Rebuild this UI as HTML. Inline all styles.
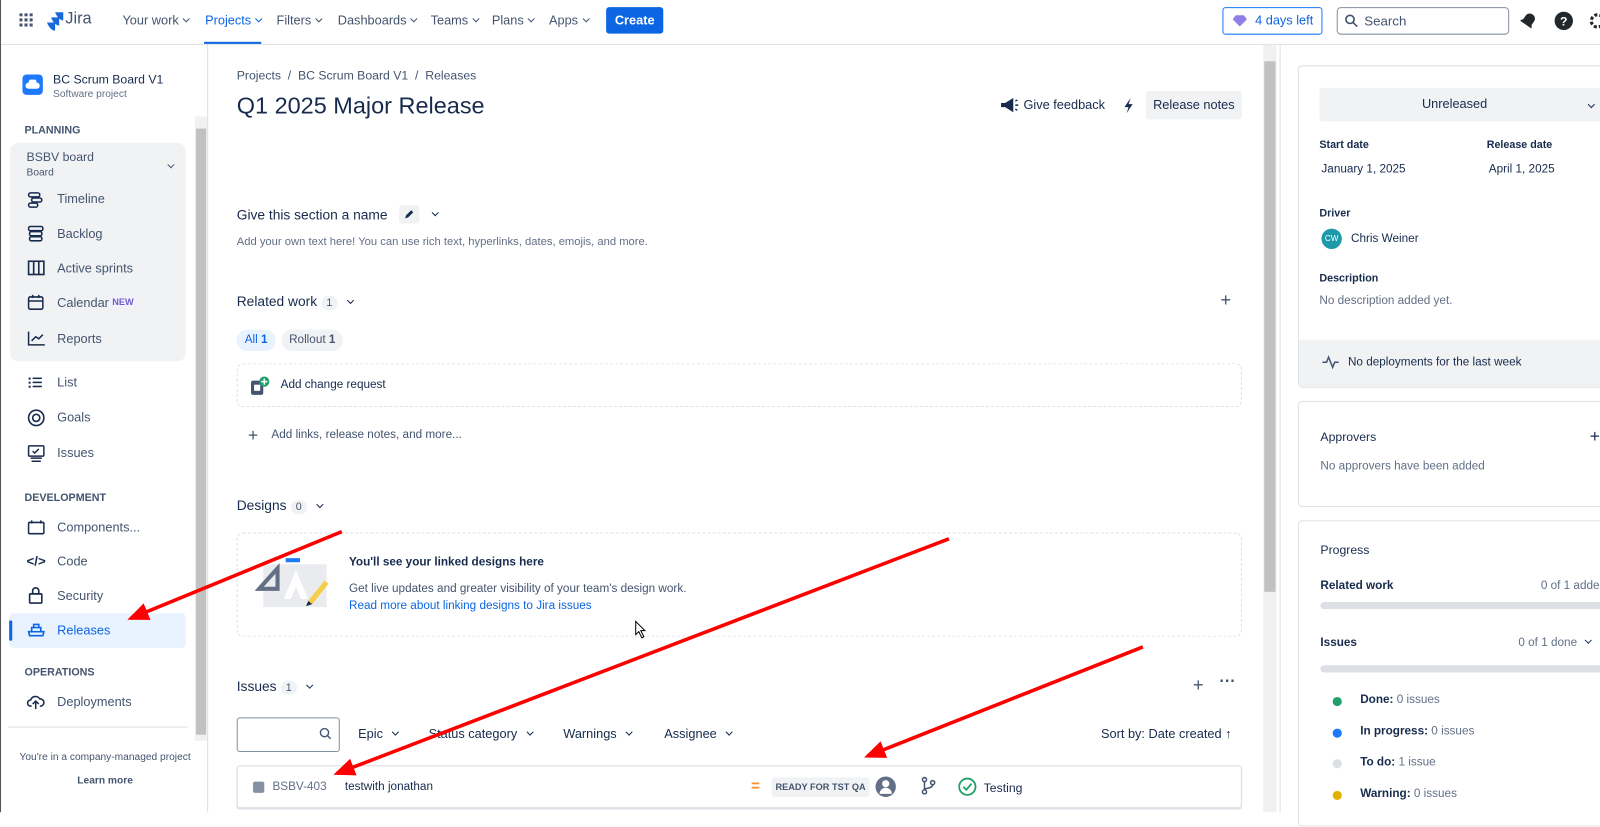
<!DOCTYPE html>
<html><head><meta charset="utf-8"><style>
*{box-sizing:border-box;margin:0;padding:0}
html,body{width:1600px;height:812px;overflow:hidden;background:#fff}
#w{position:absolute;left:0;top:0;width:1568px;height:796px;transform:scale(1.020408);transform-origin:0 0;font-family:"Liberation Sans",sans-serif;color:#172b4d;font-size:13px}
.a{position:absolute;white-space:nowrap}
.g{color:#44546f}
.b{font-weight:bold}
.nav{font-size:12.5px;color:#44546f;top:13px}
.chev{display:inline-block;width:5px;height:5px;border-right:1.6px solid currentColor;border-bottom:1.6px solid currentColor;transform:rotate(45deg);margin-left:5px;position:relative;top:-3px}
.sec{font-size:10.5px;font-weight:bold;color:#44546f}
.si{font-size:12.5px;color:#44546f}
.dash{position:absolute;border:1.5px dashed #dcdfe4;border-radius:6px}
.badge{display:inline-block;background:#f1f2f4;border-radius:8px;padding:1px 5px;font-size:10.5px;color:#44546f;margin-left:4px}
.card{position:absolute;left:1272px;width:310px;border:1px solid #dfe1e6;border-radius:4px;background:#fff}
.lbl{font-size:10.5px;font-weight:bold;color:#172b4d}
.dot{position:absolute;width:9px;height:9px;border-radius:50%;left:1306px}
</style></head><body><div id="w">
<div class="a" style="left:0;top:43px;width:1568px;height:1px;background:#dcdfe4"></div>
<div class="a" style="left:0;top:0;width:1px;height:796px;background:#555"></div>
<svg class="a" style="left:19px;top:13px" width="14" height="14"><g fill="#44546f"><rect x="0" y="0" width="3" height="3"/><rect x="5" y="0" width="3" height="3"/><rect x="10" y="0" width="3" height="3"/><rect x="0" y="5" width="3" height="3"/><rect x="5" y="5" width="3" height="3"/><rect x="10" y="5" width="3" height="3"/><rect x="0" y="10" width="3" height="3"/><rect x="5" y="10" width="3" height="3"/><rect x="10" y="10" width="3" height="3"/></g></svg>
<svg class="a" style="left:45px;top:11px" width="18" height="20"><path d="M9 1h8v8c-3 0-6-3-8-8zM5 6h8v8c-3 0-6-3-8-8zM1 11h8v8c-3 0-6-3-8-8z" fill="#1868db"/></svg>
<div class="a" style="left:64px;top:10px;font-size:16px;color:#44546f">Jira</div>
<div class="a nav" style="left:120px">Your work<span class="chev"></span></div>
<div class="a nav" style="left:201px;color:#0c66e4">Projects<span class="chev"></span></div>
<div class="a" style="left:200px;top:41px;width:56px;height:2px;background:#0c66e4"></div>
<div class="a nav" style="left:271px">Filters<span class="chev"></span></div>
<div class="a nav" style="left:331px">Dashboards<span class="chev"></span></div>
<div class="a nav" style="left:422px">Teams<span class="chev"></span></div>
<div class="a nav" style="left:482px">Plans<span class="chev"></span></div>
<div class="a nav" style="left:538px">Apps<span class="chev"></span></div>
<div class="a" style="left:594px;top:7px;width:56px;height:26px;background:#0c66e4;border-radius:3px;color:#fff;font-weight:bold;text-align:center;line-height:26px;font-size:12.5px">Create</div>
<div class="a" style="left:1198px;top:7px;width:98px;height:27px;border:1px solid #1d7afc;border-radius:3px;color:#0c66e4;line-height:25px;font-size:12.5px;padding-left:31px">4 days left</div>
<svg class="a" style="left:1208px;top:14px" width="14" height="13"><path d="M3 1h8l3 4-7 7-7-7z" fill="#8f7ee7"/></svg>
<div class="a" style="left:1310px;top:7px;width:169px;height:27px;border:1px solid #8590a2;border-radius:4px;color:#44546f;line-height:25px;padding-left:26px;font-size:13px">Search</div>
<svg class="a" style="left:1318px;top:14px" width="13" height="13"><circle cx="5" cy="5" r="4" stroke="#44546f" stroke-width="1.6" fill="none"/><path d="M8 8l4 4" stroke="#44546f" stroke-width="1.6"/></svg>
<svg class="a" style="left:1490px;top:11px" width="16" height="18"><path d="M8 2c3 0 5 2 5 5v4l2 3H1l2-3V7c0-3 2-5 5-5z" fill="#22272b" transform="rotate(35 8 9)"/></svg>
<svg class="a" style="left:1523px;top:11px" width="19" height="19"><circle cx="9.5" cy="9.5" r="9" fill="#22272b"/><text x="9.5" y="14" font-size="12" font-weight="bold" fill="#fff" text-anchor="middle" font-family="Liberation Sans">?</text></svg>
<svg class="a" style="left:1556px;top:11px" width="14" height="19"><circle cx="9.5" cy="9.5" r="6" stroke="#22272b" stroke-width="3" fill="none" stroke-dasharray="3 2"/></svg>

<div class="a" style="left:191px;top:114px;width:12px;height:612px;background:#f1f1f1"></div>
<div class="a" style="left:192px;top:126px;width:10px;height:594px;background:#c1c1c1"></div>
<div class="a" style="left:203px;top:44px;width:1px;height:752px;background:#dcdfe4"></div>
<div class="a" style="left:22px;top:73px;width:20px;height:20px;background:#1d7afc;border-radius:4px"></div>
<svg class="a" style="left:25px;top:78px" width="14" height="10"><path d="M3 9a3 3 0 010-6 4 4 0 018 0 3 3 0 010 6z" fill="#fff"/></svg>
<div class="a" style="left:52px;top:71px;font-size:12px;color:#172b4d">BC Scrum Board V1</div>
<div class="a" style="left:52px;top:87px;font-size:10px;color:#626f86">Software project</div>
<div class="a sec" style="left:24px;top:122px">PLANNING</div>
<div class="a" style="left:10px;top:140px;width:172px;height:214px;background:#f1f2f4;border-radius:8px"></div>
<div class="a" style="left:26px;top:147px;font-size:12px;color:#44546f">BSBV board</div>
<div class="a" style="left:26px;top:164px;font-size:10px;color:#44546f">Board</div>
<div class="a" style="left:160px;top:155px;color:#44546f"><span class="chev"></span></div>
<svg class="a" style="left:27px;top:188px" width="18" height="16" fill="none" stroke="#172b4d" stroke-width="1.5"><rect x="1" y="1" width="11" height="4" rx="2"/><rect x="4" y="6" width="10" height="4" rx="2"/><rect x="1" y="11" width="9" height="4" rx="2"/></svg>
<div class="a si" style="left:56px;top:188px">Timeline</div>
<svg class="a" style="left:27px;top:221px" width="16" height="16" fill="none" stroke="#172b4d" stroke-width="1.5"><rect x="1" y="1" width="14" height="4" rx="1.5"/><rect x="2" y="6" width="12" height="4" rx="1.5"/><rect x="2" y="11" width="12" height="4" rx="1.5"/></svg>
<div class="a si" style="left:56px;top:222px">Backlog</div>
<svg class="a" style="left:27px;top:255px" width="17" height="15" fill="none" stroke="#172b4d" stroke-width="1.6"><rect x="1" y="1" width="15" height="13"/><path d="M6 1v13M11 1v13"/></svg>
<div class="a si" style="left:56px;top:256px">Active sprints</div>
<svg class="a" style="left:27px;top:288px" width="16" height="16" fill="none" stroke="#172b4d" stroke-width="1.5"><rect x="1" y="3" width="14" height="12" rx="1.5"/><path d="M1 7h14M5 1v3M11 1v3"/></svg>
<div class="a si" style="left:56px;top:290px">Calendar</div>
<div class="a" style="left:107px;top:291px;font-size:9px;font-weight:bold;color:#6e5dc6;background:#f3f0ff;padding:0 3px">NEW</div>
<svg class="a" style="left:27px;top:324px" width="17" height="15" fill="none" stroke="#172b4d" stroke-width="1.5"><path d="M1 1v13h16M4 10l4-4 3 2 4-4"/></svg>
<div class="a si" style="left:56px;top:325px">Reports</div>
<svg class="a" style="left:28px;top:369px" width="14" height="12" fill="#172b4d"><rect x="0" y="1" width="2" height="2"/><rect x="4" y="1" width="9" height="1.5"/><rect x="0" y="5" width="2" height="2"/><rect x="4" y="5" width="9" height="1.5"/><rect x="0" y="9" width="2" height="2"/><rect x="4" y="9" width="9" height="1.5"/></svg>
<div class="a si" style="left:56px;top:368px">List</div>
<svg class="a" style="left:27px;top:401px" width="17" height="17" fill="none" stroke="#172b4d" stroke-width="1.6"><circle cx="8.5" cy="8.5" r="7.5"/><circle cx="8.5" cy="8.5" r="3.5"/></svg>
<div class="a si" style="left:56px;top:402px">Goals</div>
<svg class="a" style="left:27px;top:436px" width="17" height="17" fill="none" stroke="#172b4d" stroke-width="1.5"><rect x="1" y="1" width="15" height="10" rx="1"/><path d="M5 6l2 2 4-4M3 13h11M4 16h9"/></svg>
<div class="a si" style="left:56px;top:437px">Issues</div>
<div class="a sec" style="left:24px;top:482px">DEVELOPMENT</div>
<svg class="a" style="left:27px;top:509px" width="17" height="15" fill="none" stroke="#172b4d" stroke-width="1.5"><rect x="1" y="3" width="15" height="11" rx="1"/><path d="M4 1v3M13 1v3"/></svg>
<div class="a si" style="left:56px;top:510px">Components...</div>
<div class="a b" style="left:26px;top:542px;font-size:13px;color:#172b4d">&lt;/&gt;</div>
<div class="a si" style="left:56px;top:543px">Code</div>
<svg class="a" style="left:28px;top:575px" width="14" height="17" fill="none" stroke="#172b4d" stroke-width="1.6"><rect x="1" y="7" width="12" height="9" rx="1"/><path d="M4 7V4a3 3 0 016 0v3"/></svg>
<div class="a si" style="left:56px;top:577px">Security</div>
<div class="a" style="left:9px;top:601px;width:173px;height:34px;background:#e9f2ff;border-radius:4px"></div>
<div class="a" style="left:9px;top:608px;width:3px;height:20px;background:#0c66e4;border-radius:2px"></div>
<svg class="a" style="left:27px;top:610px" width="17" height="14" fill="none" stroke="#0c66e4" stroke-width="1.6"><path d="M1 9h15M2 13h13l1-4H1zM4 9V5h9v4M6 5V2h5v3"/></svg>
<div class="a si" style="left:56px;top:611px;color:#0c66e4">Releases</div>
<div class="a sec" style="left:24px;top:653px">OPERATIONS</div>
<svg class="a" style="left:26px;top:680px" width="18" height="16" fill="none" stroke="#172b4d" stroke-width="1.5"><path d="M5 12H4a3 3 0 010-6 5 5 0 019-1 3.5 3.5 0 011 7h-1M9 15V8M6 10l3-3 3 3"/></svg>
<div class="a si" style="left:56px;top:681px">Deployments</div>
<div class="a" style="left:8px;top:712px;width:176px;height:1px;background:#dcdfe4"></div>
<div class="a" style="left:0;top:737px;width:206px;text-align:center;font-size:10px;color:#44546f">You're in a company-managed project</div>
<div class="a b" style="left:0;top:760px;width:206px;text-align:center;font-size:10px;color:#44546f">Learn more</div>

<div class="a" style="left:232px;top:67px;font-size:12px;color:#44546f">Projects&nbsp;&nbsp;/&nbsp;&nbsp;BC Scrum Board V1&nbsp;&nbsp;/&nbsp;&nbsp;Releases</div>
<div class="a" style="left:232px;top:90px;font-size:23px;color:#172b4d">Q1 2025 Major Release</div>
<svg class="a" style="left:980px;top:95px" width="18" height="16"><path d="M1 6h4l8-5v14l-8-5H1z M4 10l2 5" fill="#172b4d"/><path d="M15 4l2-1M15 8h3M15 12l2 1" stroke="#172b4d" stroke-width="1.4"/></svg>
<div class="a" style="left:1003px;top:96px;font-size:12.5px">Give feedback</div>
<svg class="a" style="left:1100px;top:95px" width="12" height="17"><path d="M8 1L2 10h4l-2 6 6-9H6z" fill="#172b4d"/></svg>
<div class="a" style="left:1123px;top:89px;width:94px;height:28px;background:#f1f2f4;border-radius:3px;text-align:center;line-height:28px;font-size:12.5px">Release notes</div>
<div class="a" style="left:1238px;top:44px;width:13px;height:752px;background:#f1f1f1"></div>
<div class="a" style="left:1239px;top:60px;width:11px;height:520px;background:#c1c1c1"></div>
<div class="a" style="left:1254px;top:44px;width:1px;height:752px;background:#dcdfe4"></div>

<div class="a" style="left:232px;top:203px;font-size:13.5px;color:#172b4d">Give this section a name</div>
<div class="a" style="left:391px;top:201px;width:20px;height:18px;background:#f1f2f4;border-radius:3px"></div>
<svg class="a" style="left:395px;top:204px" width="12" height="12"><path d="M2 10l1-3 5-5 2 2-5 5z" fill="#172b4d"/></svg>
<div class="a" style="left:419px;top:202px;color:#172b4d"><span class="chev"></span></div>
<div class="a" style="left:232px;top:231px;font-size:11px;color:#626f86">Add your own text here! You can use rich text, hyperlinks, dates, emojis, and more.</div>

<div class="a" style="left:232px;top:288px;font-size:13.5px">Related work<span class="badge">1</span><span class="chev" style="margin-left:10px"></span></div>
<div class="a" style="left:1196px;top:284px;font-size:18px;color:#44546f">+</div>
<div class="a" style="left:232px;top:323px;width:38px;height:21px;background:#e9f2ff;border-radius:10px;color:#0c66e4;font-size:11.5px;line-height:21px;text-align:center">All <b>1</b></div>
<div class="a" style="left:276px;top:323px;width:60px;height:21px;background:#f1f2f4;border-radius:10px;color:#44546f;font-size:11.5px;line-height:21px;text-align:center">Rollout <b>1</b></div>
<div class="dash" style="left:232px;top:356px;width:985px;height:43px"></div>
<svg class="a" style="left:245px;top:368px" width="20" height="20"><rect x="1" y="5" width="12" height="14" rx="2" fill="#44546f"/><rect x="4" y="9" width="6" height="6" fill="#fff"/><circle cx="14" cy="6" r="5" fill="#22a06b"/><path d="M14 3v6M11 6h6" stroke="#fff" stroke-width="1.5"/></svg>
<div class="a" style="left:275px;top:371px;font-size:11.5px">Add change request</div>
<div class="a" style="left:243px;top:417px;font-size:17px;color:#44546f">+</div>
<div class="a" style="left:266px;top:420px;font-size:11.5px;color:#44546f">Add links, release notes, and more...</div>

<div class="a" style="left:232px;top:488px;font-size:13.5px">Designs<span class="badge">0</span><span class="chev" style="margin-left:10px"></span></div>
<div class="dash" style="left:232px;top:522px;width:985px;height:102px"></div>
<svg class="a" style="left:250px;top:545px" width="78" height="54"><rect x="8" y="8" width="62" height="42" fill="#e9ebee"/><rect x="30" y="2" width="14" height="4" fill="#1d7afc"/><path d="M4 32L22 12v20z" fill="none" stroke="#626f86" stroke-width="4"/><path d="M28 42l12-28 12 28h-7l-5-12-5 12z" fill="#fff"/><path d="M52 44l16-20 4 3-16 20z" fill="#f5cd47"/><path d="M52 44l-2 5 6-2z" fill="#172b4d"/></svg>
<div class="a b" style="left:342px;top:545px;font-size:11.5px">You'll see your linked designs here</div>
<div class="a" style="left:342px;top:571px;font-size:11.5px;color:#44546f">Get live updates and greater visibility of your team's design work.</div>
<div class="a" style="left:342px;top:588px;font-size:11.5px;color:#0c66e4">Read more about linking designs to Jira issues</div>
<svg class="a" style="left:622px;top:608px" width="12" height="18"><path d="M1 1v13l3-3 3 6 2-1-3-6h4z" fill="#fff" stroke="#000" stroke-width="1"/></svg>

<div class="a" style="left:232px;top:665px;font-size:13.5px">Issues<span class="badge">1</span><span class="chev" style="margin-left:10px"></span></div>
<div class="a" style="left:1169px;top:661px;font-size:18px;color:#44546f">+</div>
<div class="a b" style="left:1195px;top:660px;font-size:16px;color:#44546f">···</div>
<div class="a" style="left:232px;top:703px;width:101px;height:34px;border:1.5px solid #8590a2;border-radius:3px"></div>
<svg class="a" style="left:313px;top:713px" width="12" height="12"><circle cx="5" cy="5" r="4" stroke="#44546f" stroke-width="1.4" fill="none"/><path d="M8 8l3 3" stroke="#44546f" stroke-width="1.4"/></svg>
<div class="a" style="left:351px;top:712px;font-size:12.5px">Epic<span class="chev" style="margin-left:10px"></span></div>
<div class="a" style="left:420px;top:712px;font-size:12.5px">Status category<span class="chev" style="margin-left:10px"></span></div>
<div class="a" style="left:552px;top:712px;font-size:12.5px">Warnings<span class="chev" style="margin-left:10px"></span></div>
<div class="a" style="left:651px;top:712px;font-size:12.5px">Assignee<span class="chev" style="margin-left:10px"></span></div>
<div class="a" style="left:1079px;top:712px;font-size:12.5px">Sort by: Date created ↑</div>
<div class="a" style="left:232px;top:750px;width:985px;height:42px;border:1px solid #dcdfe4;border-radius:3px;box-shadow:0 1px 1px rgba(9,30,66,.15)"></div>
<div class="a" style="left:248px;top:766px;width:11px;height:11px;background:#8590a2;border-radius:2px"></div>
<div class="a" style="left:267px;top:765px;font-size:11.5px;color:#626f86">BSBV-403</div>
<div class="a" style="left:338px;top:765px;font-size:11.5px">testwith jonathan</div>
<div class="a b" style="left:736px;top:762px;font-size:15px;color:#f79232">=</div>
<div class="a b" style="left:756px;top:762px;height:19px;padding:0 4px;background:#f1f2f4;border-radius:3px;font-size:9px;line-height:19px;color:#44546f">READY FOR TST QA</div>
<svg class="a" style="left:858px;top:761px" width="20" height="20"><circle cx="10" cy="10" r="10" fill="#626f86"/><circle cx="10" cy="7" r="3.5" fill="#fff"/><path d="M4 17a6 6 0 0112 0z" fill="#fff"/></svg>
<svg class="a" style="left:903px;top:761px" width="14" height="18" fill="none" stroke="#44546f" stroke-width="1.5"><circle cx="3" cy="3" r="2"/><circle cx="3" cy="15" r="2"/><circle cx="11" cy="6" r="2"/><path d="M3 5v8M11 8c0 4-8 3-8 5"/></svg>
<svg class="a" style="left:939px;top:762px" width="18" height="18"><circle cx="9" cy="9" r="8" stroke="#22a06b" stroke-width="1.8" fill="none"/><path d="M5 9l3 3 5-6" stroke="#22a06b" stroke-width="1.8" fill="none"/></svg>
<div class="a" style="left:964px;top:765px;font-size:12px">Testing</div>

<div class="card" style="top:64px;height:316px"></div>
<div class="a" style="left:1293px;top:86px;width:285px;height:33px;background:#f1f2f4;border-radius:3px;text-align:center;line-height:33px;font-size:12.5px;padding-right:20px">Unreleased</div>
<div class="a" style="left:1552px;top:96px"><span class="chev"></span></div>
<div class="a lbl" style="left:1293px;top:136px">Start date</div>
<div class="a" style="left:1295px;top:160px;font-size:11.5px">January 1, 2025</div>
<div class="a lbl" style="left:1457px;top:136px">Release date</div>
<div class="a" style="left:1459px;top:160px;font-size:11.5px">April 1, 2025</div>
<div class="a lbl" style="left:1293px;top:203px">Driver</div>
<div class="a" style="left:1295px;top:224px;width:20px;height:20px;border-radius:50%;background:#1d9aaa;color:#fff;font-size:8px;text-align:center;line-height:20px">CW</div>
<div class="a" style="left:1324px;top:228px;font-size:11.5px">Chris Weiner</div>
<div class="a lbl" style="left:1293px;top:267px">Description</div>
<div class="a" style="left:1293px;top:289px;font-size:11.5px;color:#626f86">No description added yet.</div>
<div class="a" style="left:1273px;top:333px;width:309px;height:46px;background:#f1f2f4"></div>
<svg class="a" style="left:1295px;top:348px" width="18" height="14"><path d="M1 7h4l2-5 4 10 2-5h4" stroke="#44546f" stroke-width="1.5" fill="none"/></svg>
<div class="a" style="left:1321px;top:349px;font-size:11.5px">No deployments for the last week</div>
<div class="card" style="top:393px;height:104px"></div>
<div class="a" style="left:1294px;top:421px;font-size:12px">Approvers</div>
<div class="a" style="left:1558px;top:418px;font-size:17px">+</div>
<div class="a" style="left:1294px;top:451px;font-size:11.5px;color:#626f86">No approvers have been added</div>
<div class="card" style="top:510px;height:300px"></div>
<div class="a" style="left:1294px;top:532px;font-size:12px">Progress</div>
<div class="a" style="left:1294px;top:568px;font-size:11.5px;font-weight:bold">Related work</div>
<div class="a" style="left:1510px;top:568px;font-size:11.5px;color:#626f86">0 of 1 added</div>
<div class="a" style="left:1294px;top:590px;width:290px;height:7px;background:#dcdfe4;border-radius:4px"></div>
<div class="a" style="left:1294px;top:624px;font-size:11.5px;font-weight:bold">Issues</div>
<div class="a" style="left:1488px;top:624px;font-size:11.5px;color:#626f86">0 of 1 done<span class="chev" style="color:#172b4d;margin-left:8px"></span></div>
<div class="a" style="left:1294px;top:652px;width:290px;height:7px;background:#dcdfe4;border-radius:4px"></div>
<div class="dot" style="top:683px;background:#22a06b"></div>
<div class="a" style="left:1333px;top:680px;font-size:11.5px"><b>Done:</b> <span style="color:#626f86">0 issues</span></div>
<div class="dot" style="top:714px;background:#1d7afc"></div>
<div class="a" style="left:1333px;top:711px;font-size:11.5px"><b>In progress:</b> <span style="color:#626f86">0 issues</span></div>
<div class="dot" style="top:744px;background:#dcdfe4"></div>
<div class="a" style="left:1333px;top:741px;font-size:11.5px"><b>To do:</b> <span style="color:#626f86">1 issue</span></div>
<div class="dot" style="top:775px;background:#e2b203"></div>
<div class="a" style="left:1333px;top:772px;font-size:11.5px"><b>Warning:</b> <span style="color:#626f86">0 issues</span></div>

<svg class="a" style="left:0;top:0" width="1568" height="796">
<defs><marker id="h" markerWidth="6" markerHeight="5" refX="5" refY="2.5" orient="auto"><path d="M0 0L6 2.5 0 5z" fill="#f00"/></marker></defs>
<g stroke="#f00" stroke-width="3.5" fill="none" marker-end="url(#h)">
<path d="M335 521L128 606"/>
<path d="M930 528L330 758"/>
<path d="M1120 634L850 741"/>
</g></svg>
</div></body></html>
